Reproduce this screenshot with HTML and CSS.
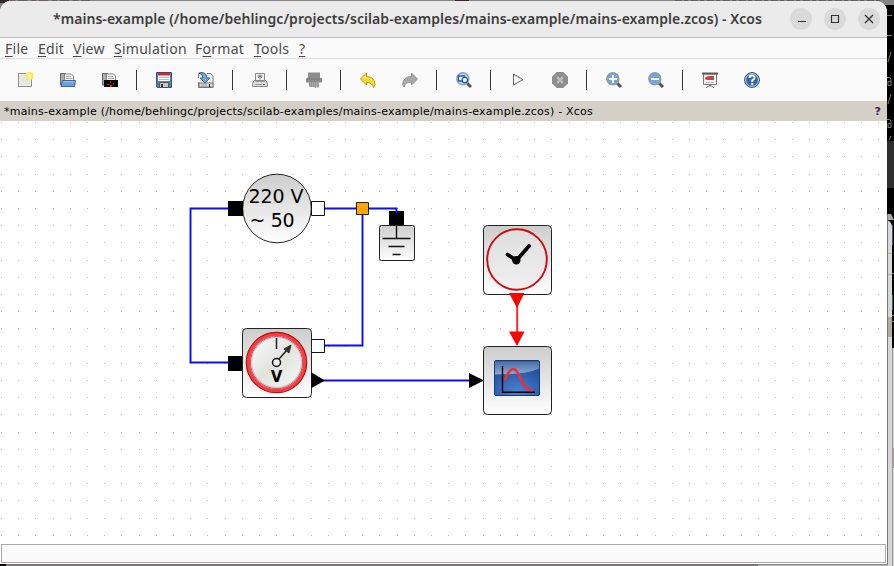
FILE: index.html
```html
<!DOCTYPE html>
<html lang="en">
<head>
<meta charset="utf-8">
<title>Xcos</title>
<link rel="stylesheet" href="styles.css">
</head>
<body>
<div class="desktop">
<svg class="backdrop" width="894" height="566" viewBox="0 0 894 566">
  <rect width="894" height="566" fill="#858383"/>
  <path d="M0 0h9v3H0zM455 0h14v1h-14z" fill="#33292c"/>
  <path d="M675 0h205" stroke="#403a3e" stroke-dasharray="7 2 4 3"/>
  <path d="M10 0h84" stroke="#69605f" stroke-width="2" stroke-dasharray="5 3 9 4"/>
  <rect x="880" y="5" width="14" height="209" fill="#000"/>
  <rect x="880" y="141" width="14" height="47" fill="#2d2d2d"/>
  <path d="M887 15.500h5M887 35.500h5" stroke="#777"/>
  <path d="M888 62l3-10M888 104l3-10M889 140l2-4" stroke="#8b7965" fill="none"/>
  <path d="M887 77.500h3l1 2v6h-3v-4h3M887 119.500h3l1 2v6h-3v-4h3" stroke="#777" fill="none"/>
  <rect x="887" y="214" width="7" height="134" fill="#000"/>
  <path d="M887 214h4l3 6h-7z" fill="#aaa"/>
  <path d="M892.500 225v20M892.500 295v15" stroke="#375b68"/>
  <path d="M892 273.500h2M892 315.500h2M892 321.500h2" stroke="#777"/>
  <path d="M887 220q5 2 5 7v339h-5z" fill="#d8d7d7"/>
  <path d="M887 253.500h5M887 274.500h5" stroke="#aaa"/>
  <path d="M887 317h5v20h-5z" fill="#b2aa9e"/>
  <path d="M892 348h2v218h-2z" fill="#d5d4d4"/>
  <path d="M892 448h2v20h-2z" fill="#aaa397"/>
  <path d="M892.500 348v218" stroke="#999"/>
  <path d="M887.500 214v352" stroke="#777"/>
  <path d="M0 564h758v2H0z" fill="#777576"/>
  <path d="M0 564h6v2H0z" fill="#000"/>
  <path d="M758 564h130v1H758z" fill="#888"/>
  <path d="M758 565h130v1H758z" fill="#b5b5b5"/>
</svg>
<main class="window">
  <header class="titlebar">
    <h1>*mains-example (/home/behlingc/projects/scilab-examples/mains-example/mains-example.zcos) - Xcos</h1>
    <div class="controls">
      <button><svg width="22" height="22"><path d="M8 13.500h8" stroke="#333" stroke-width="1.200"/></svg></button>
      <button><svg width="22" height="22"><path d="M7.500 7.500h7v7h-7z" stroke="#333" stroke-width="1.200" fill="none"/></svg></button>
      <button><svg width="22" height="22"><path d="M7 7l8 8M15 7l-8 8" stroke="#333" stroke-width="1.300"/></svg></button>
    </div>
  </header>
  <nav class="menubar">
    <span class="m1"><u>F</u>ile</span><span class="m2"><u>E</u>dit</span><span class="m3"><u>V</u>iew</span><span class="m4"><u>S</u>imulation</span><span class="m5">F<u>o</u>rmat</span><span class="m6"><u>T</u>ools</span><span class="m7"><u>?</u></span>
  </nav>
  <div class="toolbar">
    <svg class="icon" viewBox="0 0 16 16"><path d="M.500 1.500h13v13H.500z" fill="#eee" stroke="#8c8d88"/><path d="M2 3h10v10H2z" fill="#e6e6e6"/><circle cx="11.500" cy="4" r="4" fill="#f5ed55"/><circle cx="11.500" cy="4" r="1.700" fill="#fffde0"/></svg>
    <svg class="icon" viewBox="0 0 16 16"><path d="M.500 13V1.500h5l1 2h6V13z" fill="#aaa" stroke="#666"/><path d="M4.500 9V2h7l2 2v6z" fill="#f5f5f5" stroke="#888"/><path d="M6 4.500h5M6 6.500h6" stroke="#aaa"/><path d="M2.500 8.500h13l-1 6H1z" fill="#6e9fd6" stroke="#3465a4"/><path d="M3.500 9.700h11" stroke="#a9c8ec"/></svg>
    <svg class="icon" viewBox="0 0 16 16"><path d="M.500 13V1.500h5l1 2h6V13z" fill="#aaa" stroke="#666"/><path d="M4.500 9V2h7l2 2v6z" fill="#f5f5f5" stroke="#888"/><path d="M6 4.500h5M6 6.500h6" stroke="#aaa"/><path d="M2 8h14v7H2z" fill="#050505"/><path d="M5 12h2v1H5zM8 13h2v2H8zM8 9h1v2H8zM11 11h1v2h-1z" fill="#f01818"/></svg>
    <i></i>
    <svg class="icon" viewBox="0 0 16 16"><path d="M.500.500h15v15h-14l-1-1z" fill="#5b7fb5" stroke="#304f83"/><path d="M2 1h12v8H2z" fill="#fff"/><path d="M2 1h12v2.500H2z" fill="#e02020"/><path d="M3 5.500h10M3 7.500h10" stroke="#bbb"/><path d="M3.500 10.500h9v5h-9z" fill="#c7c7c2" stroke="#555"/><path d="M5 12h2v3H5z" fill="#333"/></svg>
    <svg class="icon" viewBox="0 0 16 16"><path d="M.500 6V1.500H7M9 1.500h4l2 3v11H.500V10" fill="#eee" stroke="#777"/><path d="M1 11h14v4H1z" fill="#ddd" stroke="#777"/><path d="M3 13h6" stroke="#999"/><path d="M11 12h1v3h-1z" fill="#111"/><path d="M1 1q7-2 8 5h3l-5 5-5-5h3q0-4-4-5z" fill="#79a9cf" stroke="#2c648c"/></svg>
    <i></i>
    <svg class="icon" viewBox="0 0 16 16"><path d="M3.500 9V1.500h9V9" fill="#f0f0f0" stroke="#8c8c8c"/><path d="M8 2.500v5M5.500 4h5M6 6l2-2 2 2" stroke="#777" fill="none"/><path d="M2 8.500h12l1.500 3v3H.500v-3z" fill="#ddd" stroke="#888"/><path d="M3.500 9.500h9M3 12.500h7" stroke="#999"/><path d="M11 12h2v1h-2z" fill="#666"/></svg>
    <i></i>
    <svg class="icon" viewBox="0 0 16 16"><path d="M2 .500h12v5l2 1v4H0v-4l2-1z" fill="#8d8d8d"/><path d="M1 7h14" stroke="#777"/><path d="M3 10h10v5H3z" fill="#b5b5b5"/><path d="M3.500 10v4M5.500 10v5M7.500 10v5M9.500 10v6M12 10v5.500" stroke="#939393" stroke-width="1.400"/></svg>
    <i></i>
    <svg class="icon" viewBox="0 0 16 16"><path d="M.500 7l6-6v3.500q8 0 8.500 8l-1.500 3q-1-5-7-5V13z" fill="#f4d92b" stroke="#bd9900"/><path d="M2.500 7l3-3v2q6 0 8 5" fill="none" stroke="#fff07b"/></svg>
    <svg class="icon" viewBox="0 0 16 16"><path d="M15.500 7l-6-6v3.500q-8 0-9 8l1.500 2.500q1-5 7.500-5V13z" fill="#aaa" stroke="#929292"/></svg>
    <i></i>
    <svg class="icon" viewBox="0 0 16 16"><path d="M11 11l4 4" stroke="#555" stroke-width="3"/><circle cx="6.800" cy="6.800" r="6" fill="#c1d7ef" stroke="#8aa2bb" stroke-width="1.500"/><path d="M2.500 4h6v5h-6z" fill="#fff" stroke="#2858a5" stroke-width="1.400"/><circle cx="8.800" cy="8" r="2.700" fill="#fff" stroke="#2858a5" stroke-width="1.300"/></svg>
    <i></i>
    <svg class="icon" viewBox="0 0 16 16"><path d="M3.500 2v11l9.500-5.500z" fill="#f7f7f7" stroke="#666"/><path d="M4 3l8 4.500" stroke="#aaa"/></svg>
    <svg class="icon" viewBox="0 0 16 16"><path d="M4.700 0h6.600L16 4.700v6.600L11.300 16H4.700L0 11.300V4.700z" fill="#8e8e8e"/><path d="M5 5l6 6M11 5l-6 6" stroke="#c1c1c1" stroke-width="2"/></svg>
    <i></i>
    <svg class="icon" viewBox="0 0 16 16"><path d="M11 11l4 4" stroke="#555" stroke-width="3"/><circle cx="6.800" cy="6.800" r="6" fill="#75a5dd" stroke="#929d9e" stroke-width="1.500"/><path d="M3 7h8M7 3v8" stroke="#fff" stroke-width="2"/></svg>
    <svg class="icon" viewBox="0 0 16 16"><path d="M11 11l4 4" stroke="#555" stroke-width="3"/><circle cx="6.800" cy="6.800" r="6" fill="#75a5dd" stroke="#929d9e" stroke-width="1.500"/><path d="M3 7h8" stroke="#fff" stroke-width="2"/></svg>
    <i></i>
    <svg class="icon" viewBox="0 0 16 16"><path d="M8 12v3M8 13l-4 3M8 13l4 3" stroke="#777" fill="none"/><path d="M1.500 2h13v10.500h-13z" fill="#f5f5f5" stroke="#777"/><path d="M0 .500h16v2H0z" fill="#5c5c57"/><path d="M3 6q1-2 5-2h4v4H5q-2 0-2-2z" fill="#e43c31"/><path d="M8 5h3v2H8z" fill="#526da4"/><path d="M4 10.500h8" stroke="#bbb"/></svg>
    <svg class="icon" viewBox="0 0 16 16"><circle cx="8" cy="8" r="7.400" fill="#3465a4" stroke="#204a87"/><circle cx="8" cy="8" r="6.400" fill="none" stroke="#c9dcf2"/><path d="M5.500 6q0-2.500 2.600-2.500T10.600 6Q10.600 7 8.200 8.300V10" fill="none" stroke="#fff" stroke-width="1.900"/><path d="M7.200 11h2v2h-2z" fill="#fff"/></svg>
  </div>
  <div class="dock"><span class="docname">*mains-example (/home/behlingc/projects/scilab-examples/mains-example/mains-example.zcos) - Xcos</span><b>?</b></div>
  <svg class="canvas" viewBox="0 121 887 422">
    <defs>
      <pattern id="grid" x="1" y="122" width="86" height="86" patternUnits="userSpaceOnUse">
        <path d="M0 .500h86M0 17.500h86M0 34.500h86M0 52.500h86M0 69.500h86" stroke="#b7b7b7" stroke-dasharray="1 16 1 16 1 17 1 16 1 16"/>
      </pattern>
      <linearGradient id="face" x2="0" y2="1"><stop stop-color="#cdcdcd"/><stop offset="1" stop-color="#fff"/></linearGradient>
      <radialGradient id="screen" cx=".5" cy=".9" r=".7"><stop stop-color="#4a83d4"/><stop offset="1" stop-color="#2455a0"/></radialGradient>
      <linearGradient id="gloss" x2="0" y2="1"><stop stop-color="#4a6fa8"/><stop offset="1" stop-color="#8ea9ce"/></linearGradient>
      <linearGradient id="dial" x2="1" y2="1"><stop stop-color="#fff"/><stop offset=".5" stop-color="#e2e2dd"/><stop offset="1" stop-color="#fafafa"/></linearGradient>
    </defs>
    <rect y="121" width="887" height="422" fill="#fff"/>
    <rect y="121" width="887" height="422" fill="url(#grid)"/>
    <g class="wire">
      <path d="M229 208.500H190.500V362.500H229M324 208.500H357M362.500 214V345.500H324M322 380.500H470"/>
    </g>
    <circle cx="277" cy="208.500" r="34.300" fill="url(#face)" stroke="#222"/>
    <g class="label"><text x="248.500" y="203" textLength="55">220 V</text><text x="249.500" y="227" textLength="45">~ 50</text></g>
    <path d="M228 201h15v15h-15zM228 356h15v15h-15zM389 211h15v15h-15z"/>
    <path d="M311.500 201.500h13v14h-13zM311.500 339.500h13v13h-13z" fill="#fff" stroke="#111"/>
    <path class="wire" d="M368 208.500h28.500v5"/>
    <path d="M356.500 202.500h12v12h-12z" fill="#ffa500" stroke="#222"/>
    <rect x="379.500" y="225.500" width="35" height="35" rx="2" fill="url(#face)" stroke="#222"/>
    <path d="M396.500 226v12M382.500 238.500h28M388.500 246.500h16M392.500 254.500h8" stroke="#111" stroke-width="1.400"/>
    <rect x="242.500" y="328.500" width="69" height="69" rx="4" fill="url(#face)" stroke="#222"/>
    <circle cx="276.500" cy="362.500" r="28.300" fill="url(#dial)" stroke="#f83e3e" stroke-width="3.800"/>
    <circle cx="276.500" cy="362.500" r="30.200" fill="none" stroke="#b41212" stroke-width="1.200"/>
    <circle cx="276.500" cy="362.500" r="26" fill="none" stroke="#c02a32" stroke-width=".8"/>
    <circle cx="276.500" cy="362.500" r="25" fill="none" stroke="#bfc3dc"/>
    <path d="M276.500 338v11M279 359l8-9" stroke="#222" stroke-width="1.500"/>
    <path d="M291 345l-7 4 5 4z" fill="#333" stroke="#333"/>
    <circle cx="276.500" cy="362.500" r="4" fill="#eee" stroke="#111" stroke-width="1.500"/>
    <text class="volt" x="270.700" y="382">V</text>
    <path d="M311.500 372.500L325 380.500l-13.500 7.500zM469 373l15 7.500-15 7.500z"/>
    <rect x="483.500" y="225.500" width="68" height="69" rx="4" fill="url(#face)" stroke="#222"/>
    <ellipse cx="517" cy="259.500" rx="29.800" ry="30.300" fill="#e8e8e8" fill-opacity=".6" stroke="#cc0c0c" stroke-width="1.900"/>
    <path d="M507.500 254.500l9 6 12.500-14.500" fill="none" stroke="#000" stroke-width="3.700" stroke-linecap="round"/><circle cx="516.300" cy="260.300" r="4.200"/>
    <path d="M517.200 300v35" stroke="#f22" stroke-width="1.900"/>
    <path d="M509 293h15.500L517 308zM509 331.500h15.500L517 346z" fill="#f00"/>
    <rect x="483.500" y="346.500" width="68" height="68" rx="4" fill="url(#face)" stroke="#222"/>
    <rect x="494.500" y="360.500" width="45" height="35" rx="1.500" fill="url(#screen)" stroke="#173c7a"/>
    <path d="M495 361.500h44v7q-12 6-44 6z" fill="url(#gloss)"/>
    <path d="M502.500 366v26.300H535" stroke="#000" stroke-width="1.400" fill="none"/>
    <path d="M505.500 379Q509 369 513.300 369Q516.500 369 520 377Q525 390.300 531.500 390.300" stroke="#f52b32" stroke-width="2.600" stroke-linecap="round" fill="none"/>
  </svg>
  <footer class="status"><div></div></footer>
</main>
</div>
</body>
</html>
```
FILE: styles.css
```css
* { box-sizing: border-box; }
body { margin: 0; width: 894px; height: 566px; overflow: hidden; }
.desktop { display: grid; width: 894px; height: 566px; }
.desktop > * { grid-area: 1 / 1; }
.window {
  display: flex;
  flex-direction: column;
  width: 887px;
  height: 563px;
  margin-top: 1px;
  overflow: hidden;
  background: #fafafa;
  border-radius: 11px 11px 0 0;
  font-family: "Noto Sans", sans-serif;
}
.titlebar {
  display: flex;
  justify-content: space-between;
  align-items: center;
  height: 37px;
  flex: none;
  padding: 0 7px 0 53px;
  background: #ebebeb;
  border-bottom: 1px solid #bcbcbc;
}
h1 {
  margin: 0;
  color: #3d3d3d;
  font: 600 14px/20px "Noto Sans", sans-serif;
  letter-spacing: .05px;
  white-space: nowrap;
}
.controls { display: flex; gap: 12px; }
button {
  display: grid;
  place-items: center;
  width: 22px;
  height: 22px;
  padding: 0;
  border: 0;
  border-radius: 50%;
  background: #dadada;
}
.menubar {
  display: flex;
  flex: none;
  height: 21px;
  padding-left: 5px;
  color: #4a4a4a;
  border-bottom: 1px solid #dcdcdc;
  font-size: 14px;
  letter-spacing: .25px;
  line-height: 21px;
}
.menubar u { text-underline-offset: 2px; }
.m1 { width: 33px; }
.m2 { width: 35px; }
.m3 { width: 41px; }
.m4 { width: 81px; }
.m5 { width: 59px; }
.m6 { width: 45px; }
.toolbar { display: flex; align-items: center; flex: none; height: 42px; padding-left: 5px; }
.icon { width: 16px; height: 16px; margin: 0 13px; }
.toolbar i { width: 1px; height: 20px; margin: 0 6px 0 5px; background: #333; }
.dock {
  display: flex;
  justify-content: space-between;
  flex: none;
  height: 20px;
  padding: 0 6px 0 4px;
  background: #d4cfc7;
  color: #000;
  font: 11px/21px "DejaVu Sans", sans-serif;
}
.docname { letter-spacing: .21px; }
.dock b { color: #462066; }
.canvas { display: block; flex: none; width: 887px; height: 422px; }
.wire { fill: none; stroke: #0a0aff; stroke-width: 1.9; }
.label { font: 19px "DejaVu Sans", sans-serif; }
.volt { font: bold 15px "DejaVu Sans", sans-serif; }
.status { height: 21px; padding: 0 1px 1px; background: #fff; border-bottom: 1px solid #fff; }
.status div { height: 19px; margin-top: 1px; background: #fafafa; border: 1px solid #aaa; }
```
